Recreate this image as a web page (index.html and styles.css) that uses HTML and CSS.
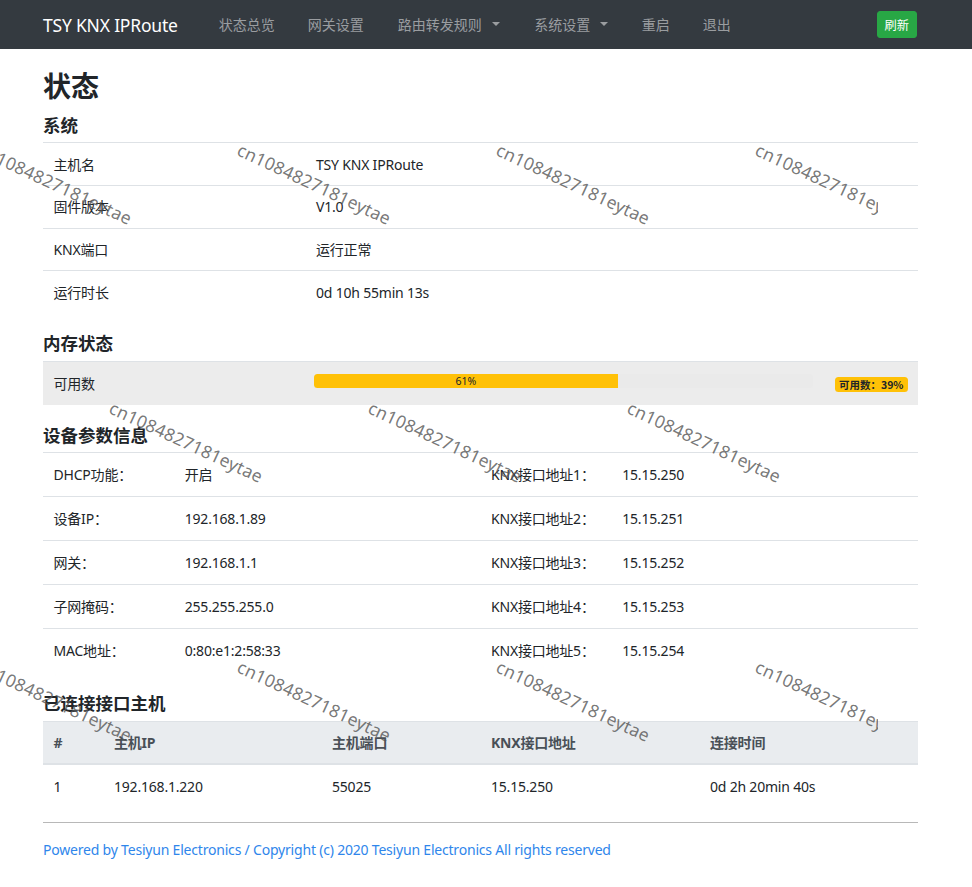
FILE: index.html
```html
<!DOCTYPE html>
<html lang="zh-CN">
<head>
<meta charset="utf-8">
<title>TSY KNX IPRoute</title>
<link rel="stylesheet" href="styles.css">
</head>
<body>
<nav class="navbar">
  <div class="navbar-inner">
    <a class="brand" href="#">TSY KNX IPRoute</a>
    <ul class="nav">
      <li><a class="nav-link" href="#">状态总览</a></li>
      <li><a class="nav-link" href="#">网关设置</a></li>
      <li><a class="nav-link dropdown" href="#">路由转发规则</a></li>
      <li><a class="nav-link dropdown" href="#">系统设置</a></li>
      <li><a class="nav-link" href="#">重启</a></li>
      <li><a class="nav-link" href="#">退出</a></li>
    </ul>
    <button class="btn-refresh" type="button">刷新</button>
  </div>
</nav>

<main class="container">
  <h2 class="page-title">状态</h2>

  <h5 class="section-title">系统</h5>
  <table class="table table-sys">
    <tr><td class="col-30">主机名</td><td>TSY KNX IPRoute</td></tr>
    <tr><td class="col-30">固件版本</td><td>V1.0</td></tr>
    <tr><td class="col-30">KNX端口</td><td>运行正常</td></tr>
    <tr><td class="col-30">运行时长</td><td>0d 10h 55min 13s</td></tr>
  </table>

  <h5 class="section-title">内存状态</h5>
  <table class="table table-mem">
    <tr class="row-active">
      <td class="col-30">可用数</td>
      <td class="mem-td">
        <div class="mem-cell">
          <div class="progress"><div class="progress-bar" style="width:61%">61%</div></div>
          <span class="badge">可用数：39%</span>
        </div>
      </td>
    </tr>
  </table>

  <h5 class="section-title">设备参数信息</h5>
  <table class="table table-dev">
    <tr><td class="col-15">DHCP功能：</td><td class="col-35">开启</td><td class="col-15">KNX接口地址1：</td><td>15.15.250</td></tr>
    <tr><td class="col-15">设备IP：</td><td class="col-35">192.168.1.89</td><td class="col-15">KNX接口地址2：</td><td>15.15.251</td></tr>
    <tr><td class="col-15">网关：</td><td class="col-35">192.168.1.1</td><td class="col-15">KNX接口地址3：</td><td>15.15.252</td></tr>
    <tr><td class="col-15">子网掩码：</td><td class="col-35">255.255.255.0</td><td class="col-15">KNX接口地址4：</td><td>15.15.253</td></tr>
    <tr><td class="col-15">MAC地址：</td><td class="col-35">0:80:e1:2:58:33</td><td class="col-15">KNX接口地址5：</td><td>15.15.254</td></tr>
  </table>

  <h5 class="section-title">已连接接口主机</h5>
  <table class="table table-hosts">
    <thead>
      <tr><th class="h-num">#</th><th class="h-ip">主机IP</th><th class="h-port">主机端口</th><th class="h-knx">KNX接口地址</th><th>连接时间</th></tr>
    </thead>
    <tbody>
      <tr><td>1</td><td>192.168.1.220</td><td>55025</td><td>15.15.250</td><td>0d 2h 20min 40s</td></tr>
    </tbody>
  </table>

  <hr class="divider">
  <footer class="footer">Powered by Tesiyun Electronics / Copyright (c) 2020 Tesiyun Electronics All rights reserved</footer>
</main>

<div class="wm-layer" aria-hidden="true">
  <span class="wm" style="left:-17px;top:141px">cn1084827181eytae</span>
  <span class="wm" style="left:242px;top:141px">cn1084827181eytae</span>
  <span class="wm" style="left:501px;top:141px">cn1084827181eytae</span>
  <span class="wm" style="left:760px;top:141px">cn1084827181eytae</span>
  <span class="wm" style="left:114px;top:399px">cn1084827181eytae</span>
  <span class="wm" style="left:373px;top:399px">cn1084827181eytae</span>
  <span class="wm" style="left:632px;top:399px">cn1084827181eytae</span>
  <span class="wm" style="left:-17px;top:658px">cn1084827181eytae</span>
  <span class="wm" style="left:242px;top:658px">cn1084827181eytae</span>
  <span class="wm" style="left:501px;top:658px">cn1084827181eytae</span>
  <span class="wm" style="left:760px;top:658px">cn1084827181eytae</span>
</div>
</body>
</html>
```

FILE: styles.css
```css
* { box-sizing: border-box; }

html, body {
  margin: 0;
  padding: 0;
}

body {
  position: relative;
  font-family: "Noto Sans", "Noto Sans CJK SC", sans-serif;
  font-size: 14px;
  line-height: 21px;
  letter-spacing: -0.2px;
  color: #212529;
  background: #fff;
}

/* ---------- navbar ---------- */
.navbar {
  height: 49px;
  background: #343a40;
}

.navbar-inner {
  display: flex;
  align-items: center;
  height: 49px;
  margin-left: 43px;
  width: 874px;
}

.brand {
  font-size: 17.5px;
  line-height: 26px;
  color: #fff;
  text-decoration: none;
  margin-right: 24.5px;
}

.nav {
  display: flex;
  list-style: none;
  margin: 0;
  padding: 0;
  flex: 1;
}

.nav-link {
  display: block;
  padding: 0 16.5px;
  color: #9a9da0;
  text-decoration: none;
  font-family: "Noto Sans CJK SC", sans-serif;
  font-size: 14px;
  line-height: 21px;
  letter-spacing: 0;
}

.nav-link.dropdown {
  padding-left: 17.5px;
  padding-right: 17px;
}

.nav-link.dropdown::after {
  content: "";
  display: inline-block;
  margin-left: 10px;
  vertical-align: 0.255em;
  border-top: 4.2px solid #9a9da0;
  border-left: 4.2px solid transparent;
  border-right: 4.2px solid transparent;
}

.btn-refresh {
  font-family: "Noto Sans CJK SC", sans-serif;
  font-size: 12.25px;
  line-height: 18px;
  padding: 3.5px 7px;
  color: #fff;
  background: #28a745;
  border: 1px solid #28a745;
  border-radius: 3px;
}

/* ---------- content ---------- */
.container {
  margin-left: 43px;
  width: 875px;
  padding-top: 20px;
}

.page-title {
  font-size: 28px;
  line-height: 34px;
  font-weight: 700;
  letter-spacing: 0;
  margin: 0 0 11.5px;
}

.section-title {
  font-size: 17.5px;
  line-height: 21px;
  font-weight: 700;
  letter-spacing: 0;
  margin: 0 0 6.5px;
}

.table {
  width: 100%;
  border-collapse: collapse;
  margin-bottom: 21px;
}

.table td,
.table th {
  text-align: left;
  vertical-align: top;
  border-top: 1px solid #dee2e6;
  padding: 10.5px;
}

.table-sys {
  margin-bottom: 20px;
}

.table-sys td {
  padding-top: 10.5px;
  padding-bottom: 10.25px;
}

.col-30 { width: 30%; }
.col-15 { width: 15%; }
.col-35 { width: 35%; }

/* memory row */
.row-active td {
  background: #ececec;
}

.table-mem {
  margin-bottom: 20px;
}

.table-mem td {
  padding-top: 11px;
  padding-bottom: 11px;
}

.table-mem .mem-td {
  padding-left: 8px;
}

.mem-cell {
  display: flex;
  align-items: center;
  height: 21px;
}

.progress {
  flex: 1;
  height: 14px;
  margin-top: -5px;
  background: #eaeaea;
  border-radius: 3.5px;
  overflow: hidden;
  display: flex;
}

.progress-bar {
  background: #ffc107;
  color: #212529;
  font-size: 10.5px;
  line-height: 14px;
  text-align: center;
  letter-spacing: 0;
}

.badge {
  margin-left: 22px;
  padding: 1px 4px;
  background: #ffc107;
  color: #212529;
  font-family: "Noto Sans CJK SC", sans-serif;
  font-size: 10.5px;
  line-height: 13px;
  font-weight: 700;
  letter-spacing: 0;
  border-radius: 3.5px;
  margin-top: 3px;
}

/* device table */
.table-dev td {
  padding-top: 11px;
  padding-bottom: 11px;
}

/* hosts table */
.table-hosts {
  margin-bottom: 13px;
}

.table-hosts th {
  background: #e9ecef;
  color: #495057;
  font-weight: 700;
  padding-top: 10px;
  padding-bottom: 10px;
  border-bottom: 2px solid #dee2e6;
}

.table-hosts td {
  padding-top: 11.5px;
  padding-bottom: 11.5px;
}

.h-num { width: 60.5px; }
.h-ip { width: 218px; }
.h-port { width: 159px; }
.h-knx { width: 219px; }

.divider {
  margin: 0 0 16px;
  border: 0;
  border-top: 1px solid #b8b8b8;
}

.footer {
  color: #2f86eb;
  font-size: 14px;
  line-height: 21px;
  padding-bottom: 20px;
}

/* ---------- watermark overlay ---------- */
.wm-layer {
  position: absolute;
  top: 0;
  left: 0;
  width: 878px;
  height: 887px;
  overflow: hidden;
  pointer-events: none;
}

.wm {
  position: absolute;
  font-family: "Noto Sans", sans-serif;
  font-size: 17.5px;
  line-height: 17px;
  letter-spacing: 0.2px;
  color: rgba(85, 85, 85, 0.8);
  white-space: nowrap;
  transform-origin: 0 0;
  transform: rotate(25deg);
}
```
